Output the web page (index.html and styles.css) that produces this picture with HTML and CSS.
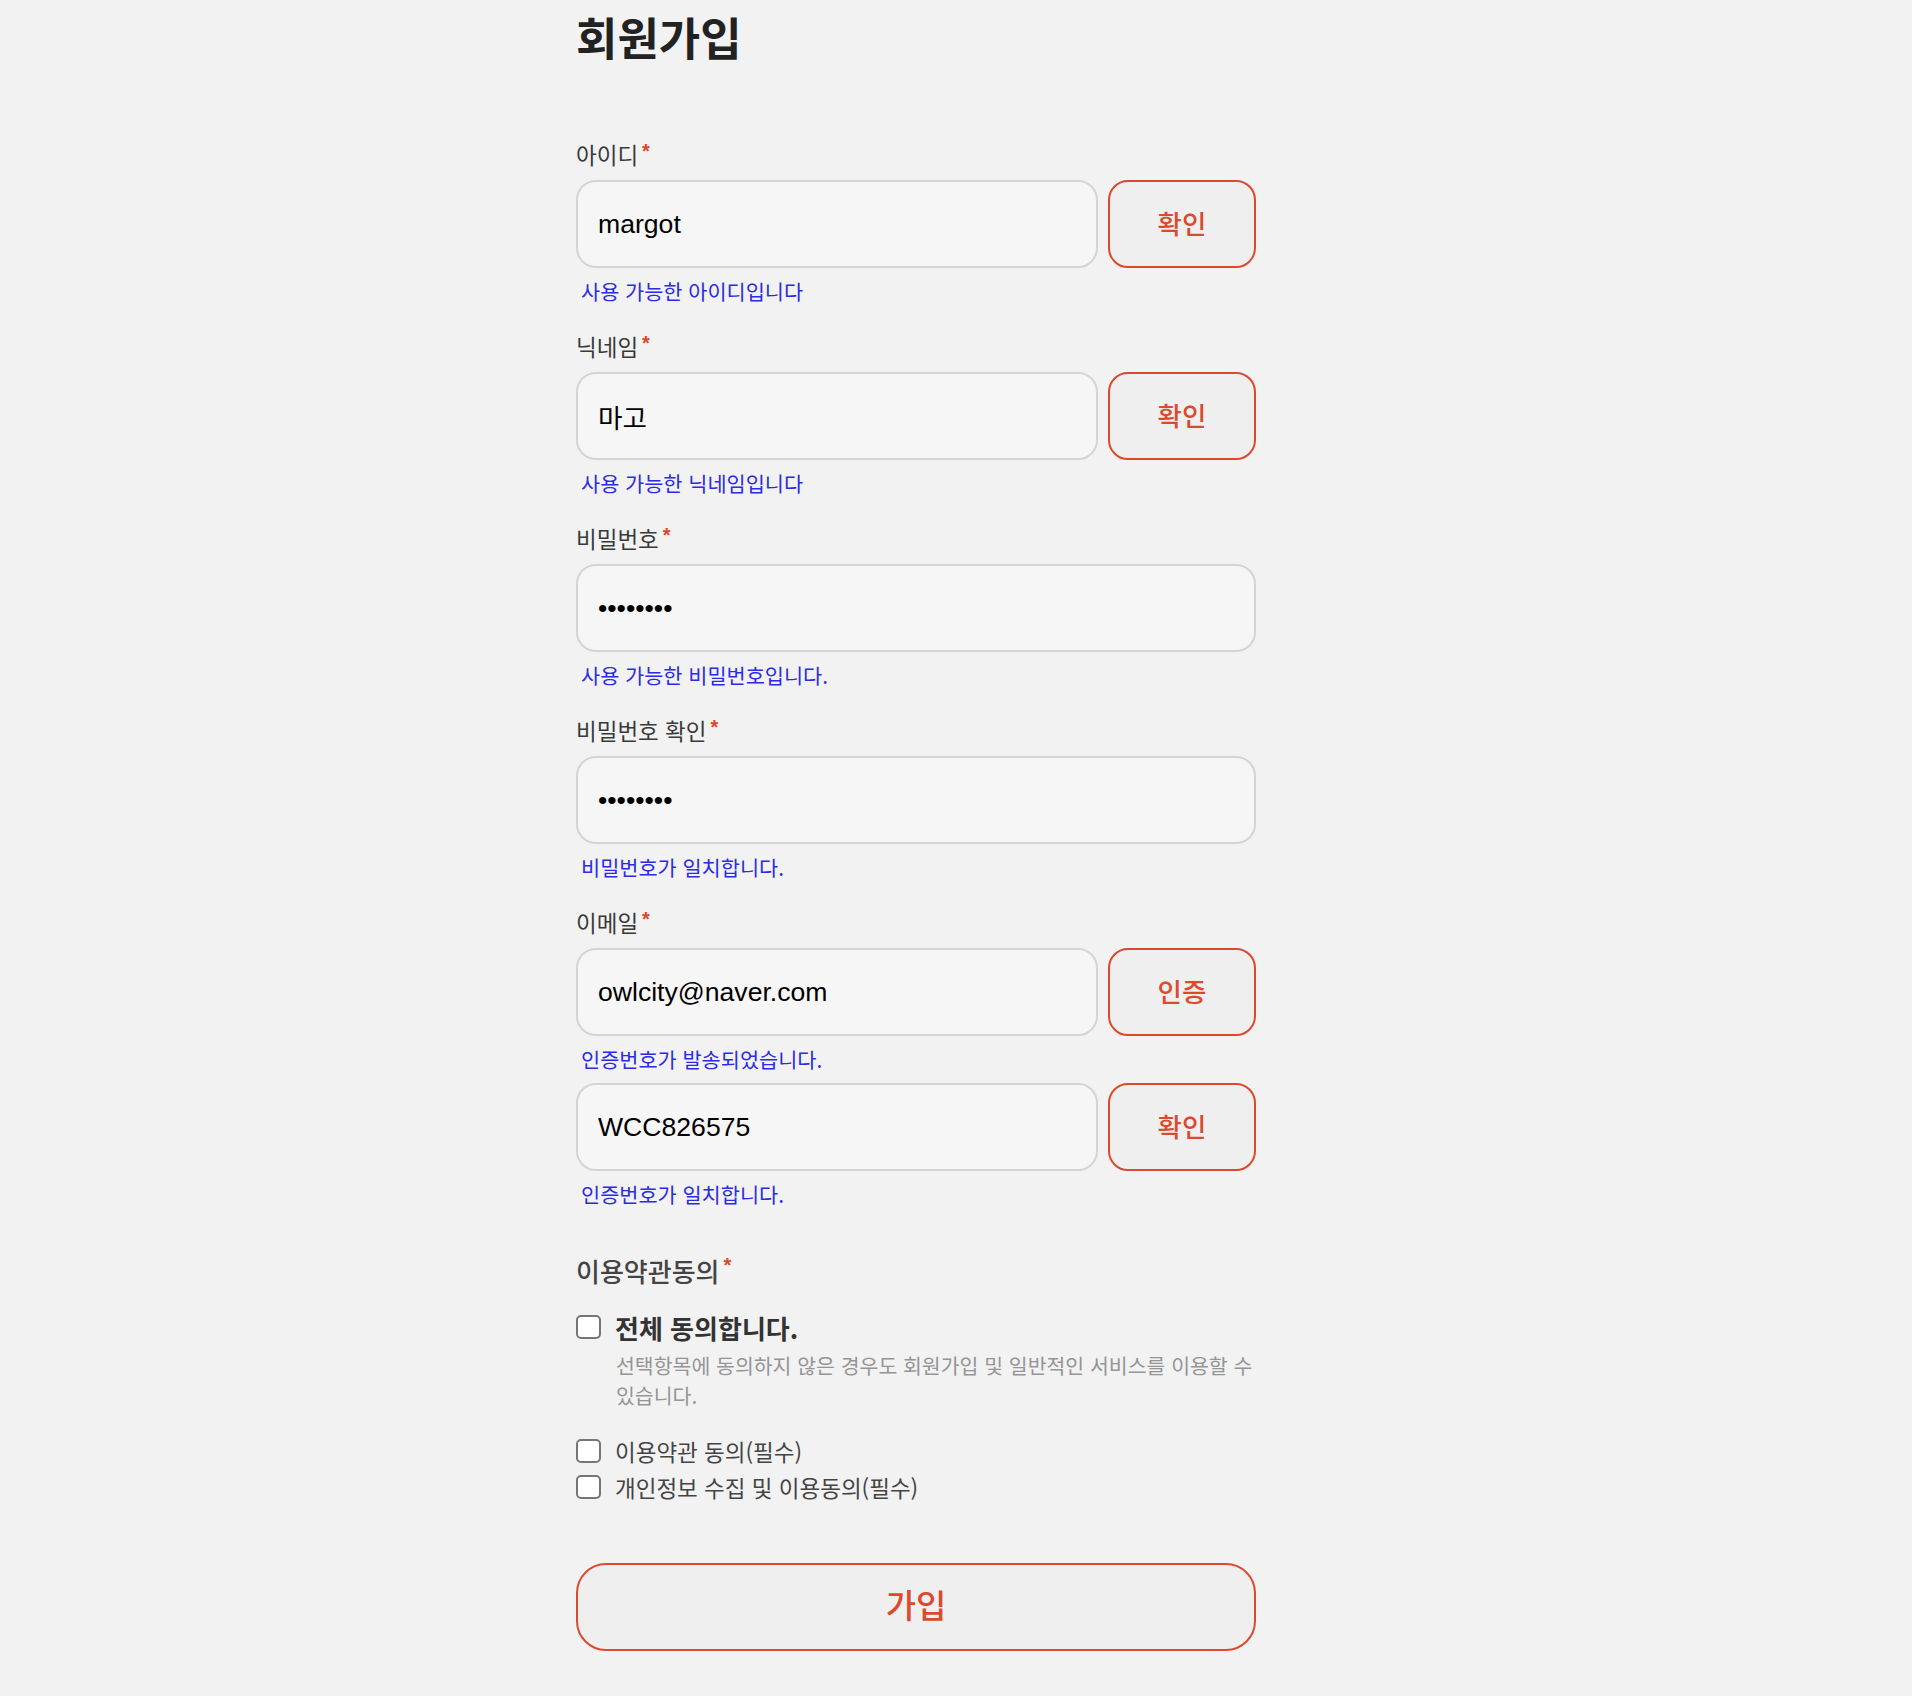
FILE: index.html
```html
<!DOCTYPE html>
<html lang="ko">
<head>
<meta charset="utf-8">
<title>회원가입</title>
<link rel="stylesheet" href="styles.css">
</head>
<body>
<main class="page">
  <h1 class="title">회원가입</h1>

  <div class="field">
    <label class="label">아이디<span class="req">*</span></label>
    <div class="row">
      <input class="input" type="text" value="margot">
      <button class="btn" type="button">확인</button>
    </div>
    <p class="hint">사용 가능한 아이디입니다</p>
  </div>

  <div class="field">
    <label class="label">닉네임<span class="req">*</span></label>
    <div class="row">
      <input class="input" type="text" value="마고">
      <button class="btn" type="button">확인</button>
    </div>
    <p class="hint">사용 가능한 닉네임입니다</p>
  </div>

  <div class="field">
    <label class="label">비밀번호<span class="req">*</span></label>
    <div class="row">
      <input class="input" type="password" value="12345678">
    </div>
    <p class="hint">사용 가능한 비밀번호입니다.</p>
  </div>

  <div class="field">
    <label class="label">비밀번호 확인<span class="req">*</span></label>
    <div class="row">
      <input class="input" type="password" value="12345678">
    </div>
    <p class="hint">비밀번호가 일치합니다.</p>
  </div>

  <div class="field">
    <label class="label">이메일<span class="req">*</span></label>
    <div class="row">
      <input class="input" type="text" value="owlcity@naver.com">
      <button class="btn" type="button">인증</button>
    </div>
    <p class="hint">인증번호가 발송되었습니다.</p>
    <div class="row row-sub">
      <input class="input" type="text" value="WCC826575">
      <button class="btn" type="button">확인</button>
    </div>
    <p class="hint">인증번호가 일치합니다.</p>
  </div>

  <section class="terms">
    <h2 class="terms-title">이용약관동의<span class="req">*</span></h2>
    <label class="check check-all">
      <input class="box" type="checkbox">
      <span>전체 동의합니다.</span>
    </label>
    <p class="terms-desc">선택항목에 동의하지 않은 경우도 회원가입 및 일반적인 서비스를 이용할 수 있습니다.</p>
    <div class="check-list">
      <label class="check">
        <input class="box" type="checkbox">
        <span>이용약관 동의(필수)</span>
      </label>
      <label class="check">
        <input class="box" type="checkbox">
        <span>개인정보 수집 및 이용동의(필수)</span>
      </label>
    </div>
  </section>

  <button class="submit" type="button">가입</button>
</main>
</body>
</html>
```

FILE: styles.css
```css
* { box-sizing: border-box; }

html, body {
  margin: 0;
  padding: 0;
  background: #f2f2f2;
}

body {
  font-family: "Noto Sans CJK KR", "Noto Sans", sans-serif;
  color: #333;
}

.page {
  width: 680px;
  margin-left: 576px;
  padding-top: 9px;
  padding-bottom: 42px;
}

.title {
  margin: 0;
  font-size: 45px;
  line-height: 56px;
  font-weight: 700;
  color: #222;
}

.field {
  display: flex;
  flex-direction: column;
}

.title + .field { margin-top: 75px; }

.field + .field { margin-top: 28px; }

.label {
  font-size: 22.5px;
  line-height: 28px;
  color: #3a3a3a;
  margin-bottom: 12px;
}

.req {
  display: inline-block;
  color: #e0432a;
  font-family: "Liberation Sans", Arial, sans-serif;
  font-size: 20px;
  font-weight: 700;
  line-height: 1;
  margin-left: 4px;
  vertical-align: top;
  position: relative;
  top: 1px;
}

.row {
  display: flex;
  gap: 10px;
}

.row-sub { margin-top: 11px; }

.input {
  flex: 1;
  min-width: 0;
  height: 88px;
  border: 2px solid #d4d4d4;
  border-radius: 20px;
  background: #f6f6f6;
  padding: 0 20px;
  font-family: "Liberation Sans", Arial, "Noto Sans CJK KR", sans-serif;
  font-size: 26.6px;
  color: #000;
  outline: none;
}

.btn {
  flex: 0 0 148px;
  height: 88px;
  border: 2px solid #dc4a2e;
  border-radius: 20px;
  background: #efefef;
  color: #dc4a2e;
  font-family: "Noto Sans CJK KR", sans-serif;
  font-size: 26.5px;
  font-weight: 500;
  padding: 0 0 4px;
}

.hint {
  margin: 10px 0 0;
  padding-left: 5px;
  font-size: 20.8px;
  line-height: 26px;
  color: #2b2be6;
}

.terms {
  margin-top: 48px;
}

.terms-title {
  margin: 0;
  font-size: 26px;
  line-height: 32px;
  font-weight: 500;
  color: #444;
}

.terms-title .req { top: 0; }

.check {
  display: flex;
  align-items: center;
  gap: 14px;
  height: 32px;
  font-size: 22.5px;
  color: #444;
}

.check-all {
  margin-top: 24px;
  font-size: 26px;
  font-weight: 700;
  color: #333;
}

.box {
  appearance: none;
  -webkit-appearance: none;
  margin: 0;
  width: 25px;
  height: 24px;
  border: 2px solid #767676;
  border-radius: 5px;
  background: #fff;
  flex: 0 0 auto;
}

.terms-desc {
  margin: 7px -8px 0 0;
  padding-left: 40px;
  font-size: 20.5px;
  line-height: 30px;
  color: #959595;
}

.check-list {
  margin-top: 25px;
  display: flex;
  flex-direction: column;
  gap: 4px;
}

.submit {
  display: block;
  width: 100%;
  height: 88px;
  margin-top: 60px;
  border: 2px solid #dc4a2e;
  border-radius: 30px;
  background: #efefef;
  color: #dc4a2e;
  font-family: "Noto Sans CJK KR", sans-serif;
  font-size: 33px;
  font-weight: 500;
  padding: 0 0 6px;
}
```
